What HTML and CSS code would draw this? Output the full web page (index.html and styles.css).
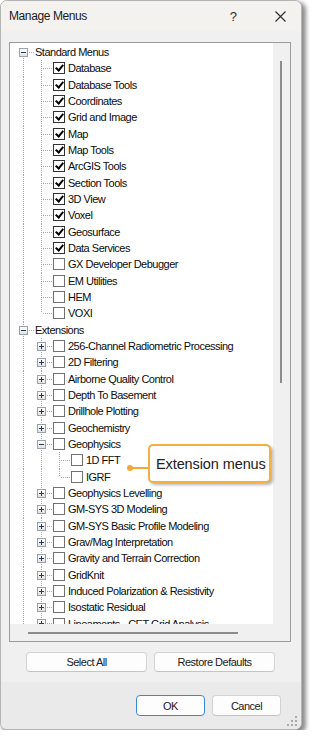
FILE: index.html
```html
<!DOCTYPE html>
<html>
<head>
<title>Manage Menus</title>
<link rel="stylesheet" href="styles.css">
</head>
<body>

<div class="dialog">
    <div class="titlebar">
        <span class="title">Manage Menus</span>
        <span class="help">?</span>
        <span class="close">
            <svg width="11" height="11" viewBox="0 0 11 11"><path d="M0.5 0.5 L10.5 10.5 M10.5 0.5 L0.5 10.5" stroke="#2b2b2b" stroke-width="1.1" fill="none"/></svg>
        </span>
    </div>

    <div class="content">
        <div class="listbox">
            <div class="tree">
                <div class="row"><span class="g f"><i class="exp"></i></span><span class="root">Standard Menus</span></div>
                <div class="row"><span class="g v"></span><span class="g t"></span><span class="cb on"></span><span class="label">Database</span></div>
                <div class="row"><span class="g v"></span><span class="g t"></span><span class="cb on"></span><span class="label">Database Tools</span></div>
                <div class="row"><span class="g v"></span><span class="g t"></span><span class="cb on"></span><span class="label">Coordinates</span></div>
                <div class="row"><span class="g v"></span><span class="g t"></span><span class="cb on"></span><span class="label">Grid and Image</span></div>
                <div class="row"><span class="g v"></span><span class="g t"></span><span class="cb on"></span><span class="label">Map</span></div>
                <div class="row"><span class="g v"></span><span class="g t"></span><span class="cb on"></span><span class="label">Map Tools</span></div>
                <div class="row"><span class="g v"></span><span class="g t"></span><span class="cb on"></span><span class="label">ArcGIS Tools</span></div>
                <div class="row"><span class="g v"></span><span class="g t"></span><span class="cb on"></span><span class="label">Section Tools</span></div>
                <div class="row"><span class="g v"></span><span class="g t"></span><span class="cb on"></span><span class="label">3D View</span></div>
                <div class="row"><span class="g v"></span><span class="g t"></span><span class="cb on"></span><span class="label">Voxel</span></div>
                <div class="row"><span class="g v"></span><span class="g t"></span><span class="cb on"></span><span class="label">Geosurface</span></div>
                <div class="row"><span class="g v"></span><span class="g t"></span><span class="cb on"></span><span class="label">Data Services</span></div>
                <div class="row"><span class="g v"></span><span class="g t"></span><span class="cb"></span><span class="label">GX Developer Debugger</span></div>
                <div class="row"><span class="g v"></span><span class="g t"></span><span class="cb"></span><span class="label">EM Utilities</span></div>
                <div class="row"><span class="g v"></span><span class="g t"></span><span class="cb"></span><span class="label">HEM</span></div>
                <div class="row"><span class="g v"></span><span class="g l"></span><span class="cb"></span><span class="label">VOXI</span></div>

                <div class="row"><span class="g t"><i class="exp"></i></span><span class="root">Extensions</span></div>
                <div class="row"><span class="g v"></span><span class="g t"><i class="exp plus"></i></span><span class="cb"></span><span class="label">256-Channel Radiometric Processing</span></div>
                <div class="row"><span class="g v"></span><span class="g t"><i class="exp plus"></i></span><span class="cb"></span><span class="label">2D Filtering</span></div>
                <div class="row"><span class="g v"></span><span class="g t"><i class="exp plus"></i></span><span class="cb"></span><span class="label">Airborne Quality Control</span></div>
                <div class="row"><span class="g v"></span><span class="g t"><i class="exp plus"></i></span><span class="cb"></span><span class="label">Depth To Basement</span></div>
                <div class="row"><span class="g v"></span><span class="g t"><i class="exp plus"></i></span><span class="cb"></span><span class="label">Drillhole Plotting</span></div>
                <div class="row"><span class="g v"></span><span class="g t"><i class="exp plus"></i></span><span class="cb"></span><span class="label">Geochemistry</span></div>
                <div class="row"><span class="g v"></span><span class="g t"><i class="exp"></i></span><span class="cb"></span><span class="label">Geophysics</span></div>
                <div class="row"><span class="g v"></span><span class="g v"></span><span class="g t"></span><span class="cb"></span><span class="label">1D FFT</span></div>
                <div class="row"><span class="g v"></span><span class="g v"></span><span class="g l"></span><span class="cb"></span><span class="label">IGRF</span></div>
                <div class="row"><span class="g v"></span><span class="g t"><i class="exp plus"></i></span><span class="cb"></span><span class="label">Geophysics Levelling</span></div>
                <div class="row"><span class="g v"></span><span class="g t"><i class="exp plus"></i></span><span class="cb"></span><span class="label">GM-SYS 3D Modeling</span></div>
                <div class="row"><span class="g v"></span><span class="g t"><i class="exp plus"></i></span><span class="cb"></span><span class="label">GM-SYS Basic Profile Modeling</span></div>
                <div class="row"><span class="g v"></span><span class="g t"><i class="exp plus"></i></span><span class="cb"></span><span class="label">Grav/Mag Interpretation</span></div>
                <div class="row"><span class="g v"></span><span class="g t"><i class="exp plus"></i></span><span class="cb"></span><span class="label">Gravity and Terrain Correction</span></div>
                <div class="row"><span class="g v"></span><span class="g t"><i class="exp plus"></i></span><span class="cb"></span><span class="label">GridKnit</span></div>
                <div class="row"><span class="g v"></span><span class="g t"><i class="exp plus"></i></span><span class="cb"></span><span class="label">Induced Polarization &amp; Resistivity</span></div>
                <div class="row"><span class="g v"></span><span class="g t"><i class="exp plus"></i></span><span class="cb"></span><span class="label">Isostatic Residual</span></div>
                <div class="row"><span class="g v"></span><span class="g t"><i class="exp plus"></i></span><span class="cb"></span><span class="label">Lineaments - CET Grid Analysis</span></div>
            </div>
            <div class="vscroll"><div class="vthumb"></div></div>
            <div class="hscroll"><div class="hthumb"></div></div>
            <div class="corner"></div>
        </div>

        <div class="actions">
            <button class="btn wide">Select All</button>
            <button class="btn wide">Restore Defaults</button>
        </div>
    </div>

    <div class="footer">
        <button class="btn small default">OK</button>
        <button class="btn small">Cancel</button>
        <svg class="grip" width="10" height="10" viewBox="0 0 10 10">
            <rect x="8" y="0" width="2" height="2" fill="#a8a8a8"/>
            <rect x="4" y="4" width="2" height="2" fill="#a8a8a8"/>
            <rect x="8" y="4" width="2" height="2" fill="#a8a8a8"/>
            <rect x="0" y="8" width="2" height="2" fill="#a8a8a8"/>
            <rect x="4" y="8" width="2" height="2" fill="#a8a8a8"/>
            <rect x="8" y="8" width="2" height="2" fill="#a8a8a8"/>
        </svg>
    </div>

    <div class="callout-line"></div>
    <div class="callout">Extension menus</div>
</div>

</body>
</html>
```

FILE: styles.css
```css
body {
    margin: 0;
    background-color: #ffffff;
    font-family: "Liberation Sans", Arial, sans-serif;
}
.dialog {
    position: relative;
    width: 302px;
    height: 730px;
    box-sizing: border-box;
    border: 1px solid #b4b4b4;
    border-radius: 7px;
    background-color: #f0f0f0;
    box-shadow: 3px 3px 4px 1px rgba(0, 0, 0, 0.45);
    overflow: hidden;
    display: flex;
    flex-direction: column;
}
.titlebar {
    height: 30px;
    flex: none;
    display: flex;
    align-items: center;
    background-color: #f4f2ef;
    padding-left: 8px;
    padding-right: 15px;
}
.title {
    flex: 1;
    font-size: 12px;
    letter-spacing: -0.4px;
    color: #1b1b1b;
}
.help {
    font-size: 13px;
    color: #2b2b2b;
    margin-right: 38px;
}
.close {
    display: flex;
}
.content {
    flex: 1;
    padding: 11px 10px 0 8px;
}
.listbox {
    height: 600px;
    box-sizing: border-box;
    border: 1px solid #9c9c9c;
    display: grid;
    grid-template-columns: 1fr 17px;
    grid-template-rows: 1fr 17px;
    background-color: #f0f0f0;
}
.tree {
    background-color: #ffffff;
    overflow: hidden;
    padding: 1px 0 0 5px;
}
.row {
    height: 16.33px;
    display: flex;
    align-items: center;
    white-space: nowrap;
    font-size: 11px;
    letter-spacing: -0.5px;
    color: #0c0c0c;
}
.g {
    position: relative;
    flex: none;
    width: 18px;
    height: 100%;
}
/* tree guide lines, drawn as 1px dots */
.v::before, .t::before, .l::before, .f::before {
    content: "";
    position: absolute;
    left: 8px;
    top: 0;
    bottom: 0;
    width: 1px;
    background: repeating-linear-gradient(to bottom, #a8a8a8 0 1px, transparent 1px 2px);
}
.l::before {
    bottom: auto;
    height: 8px;
}
.f::before {
    top: 8px;
}
.t::after, .l::after, .f::after {
    content: "";
    position: absolute;
    left: 10px;
    right: -2px;
    top: 8px;
    height: 1px;
    background: repeating-linear-gradient(to right, #a8a8a8 0 1px, transparent 1px 2px);
}
.exp {
    position: absolute;
    left: 4px;
    top: 4px;
    width: 9px;
    height: 9px;
    box-sizing: border-box;
    border: 1px solid #9aa1a9;
    background: linear-gradient(#ffffff, #e2e2e2);
    z-index: 1;
}
.exp::before {
    content: "";
    position: absolute;
    left: 1px;
    top: 3px;
    width: 5px;
    height: 1px;
    background-color: #25395a;
}
.plus::after {
    content: "";
    position: absolute;
    left: 3px;
    top: 1px;
    width: 1px;
    height: 5px;
    background-color: #25395a;
}
.root {
    margin-left: 2px;
}
.cb {
    position: relative;
    flex: none;
    width: 12px;
    height: 12px;
    box-sizing: border-box;
    margin-left: 2px;
    border: 1px solid #727272;
    background-color: #ffffff;
}
.cb.on {
    border-color: #333333;
}
.cb.on::after {
    content: "";
    position: absolute;
    left: 3px;
    top: 0px;
    width: 3px;
    height: 6px;
    border-right: 2px solid #000000;
    border-bottom: 2px solid #000000;
    transform: rotate(40deg);
}
.label {
    margin-left: 3px;
}
.vthumb {
    margin: 18px 0 0 7px;
    width: 2px;
    height: 322px;
    background-color: #8c8c8c;
}
.hthumb {
    margin: 8px 0 0 18px;
    width: 210px;
    height: 2px;
    background-color: #8c8c8c;
}
.actions {
    display: flex;
    justify-content: center;
    gap: 7px;
    margin-top: 10px;
    padding-left: 1px;
}
.btn {
    font-family: "Liberation Sans", Arial, sans-serif;
    font-size: 11px;
    letter-spacing: -0.5px;
    color: #1a1a1a;
    background-color: #fdfdfd;
    border: 1px solid #d3d3d3;
    border-bottom-color: #c4c4c4;
    border-radius: 4px;
    padding: 0;
}
.wide {
    width: 121px;
    height: 20px;
}
.footer {
    position: relative;
    height: 47px;
    flex: none;
    display: flex;
    justify-content: flex-end;
    gap: 7px;
    padding: 13px 20px 0 0;
    box-sizing: border-box;
    background-color: #eaeaea;
}
.small {
    width: 69px;
    height: 21px;
}
.default {
    border: 1px solid #3c86d3;
}
.grip {
    position: absolute;
    right: 4px;
    bottom: 3px;
}
.callout-line {
    position: absolute;
    left: 128px;
    top: 466px;
    width: 20px;
    height: 2px;
    background-color: #f1a933;
}
.callout-line::before {
    content: "";
    position: absolute;
    left: -2px;
    top: -2px;
    width: 6px;
    height: 6px;
    border-radius: 50%;
    background-color: #f1a933;
}
.callout {
    position: absolute;
    left: 147px;
    top: 443px;
    width: 123px;
    height: 39px;
    box-sizing: border-box;
    border: 2px solid #f3b040;
    border-radius: 5px;
    background-color: #ffffff;
    box-shadow: 2px 2px 3px rgba(0, 0, 0, 0.3);
    padding-left: 6px;
    display: flex;
    align-items: center;
    font-size: 14.5px;
    color: #222222;
    letter-spacing: -0.1px;
}
```
